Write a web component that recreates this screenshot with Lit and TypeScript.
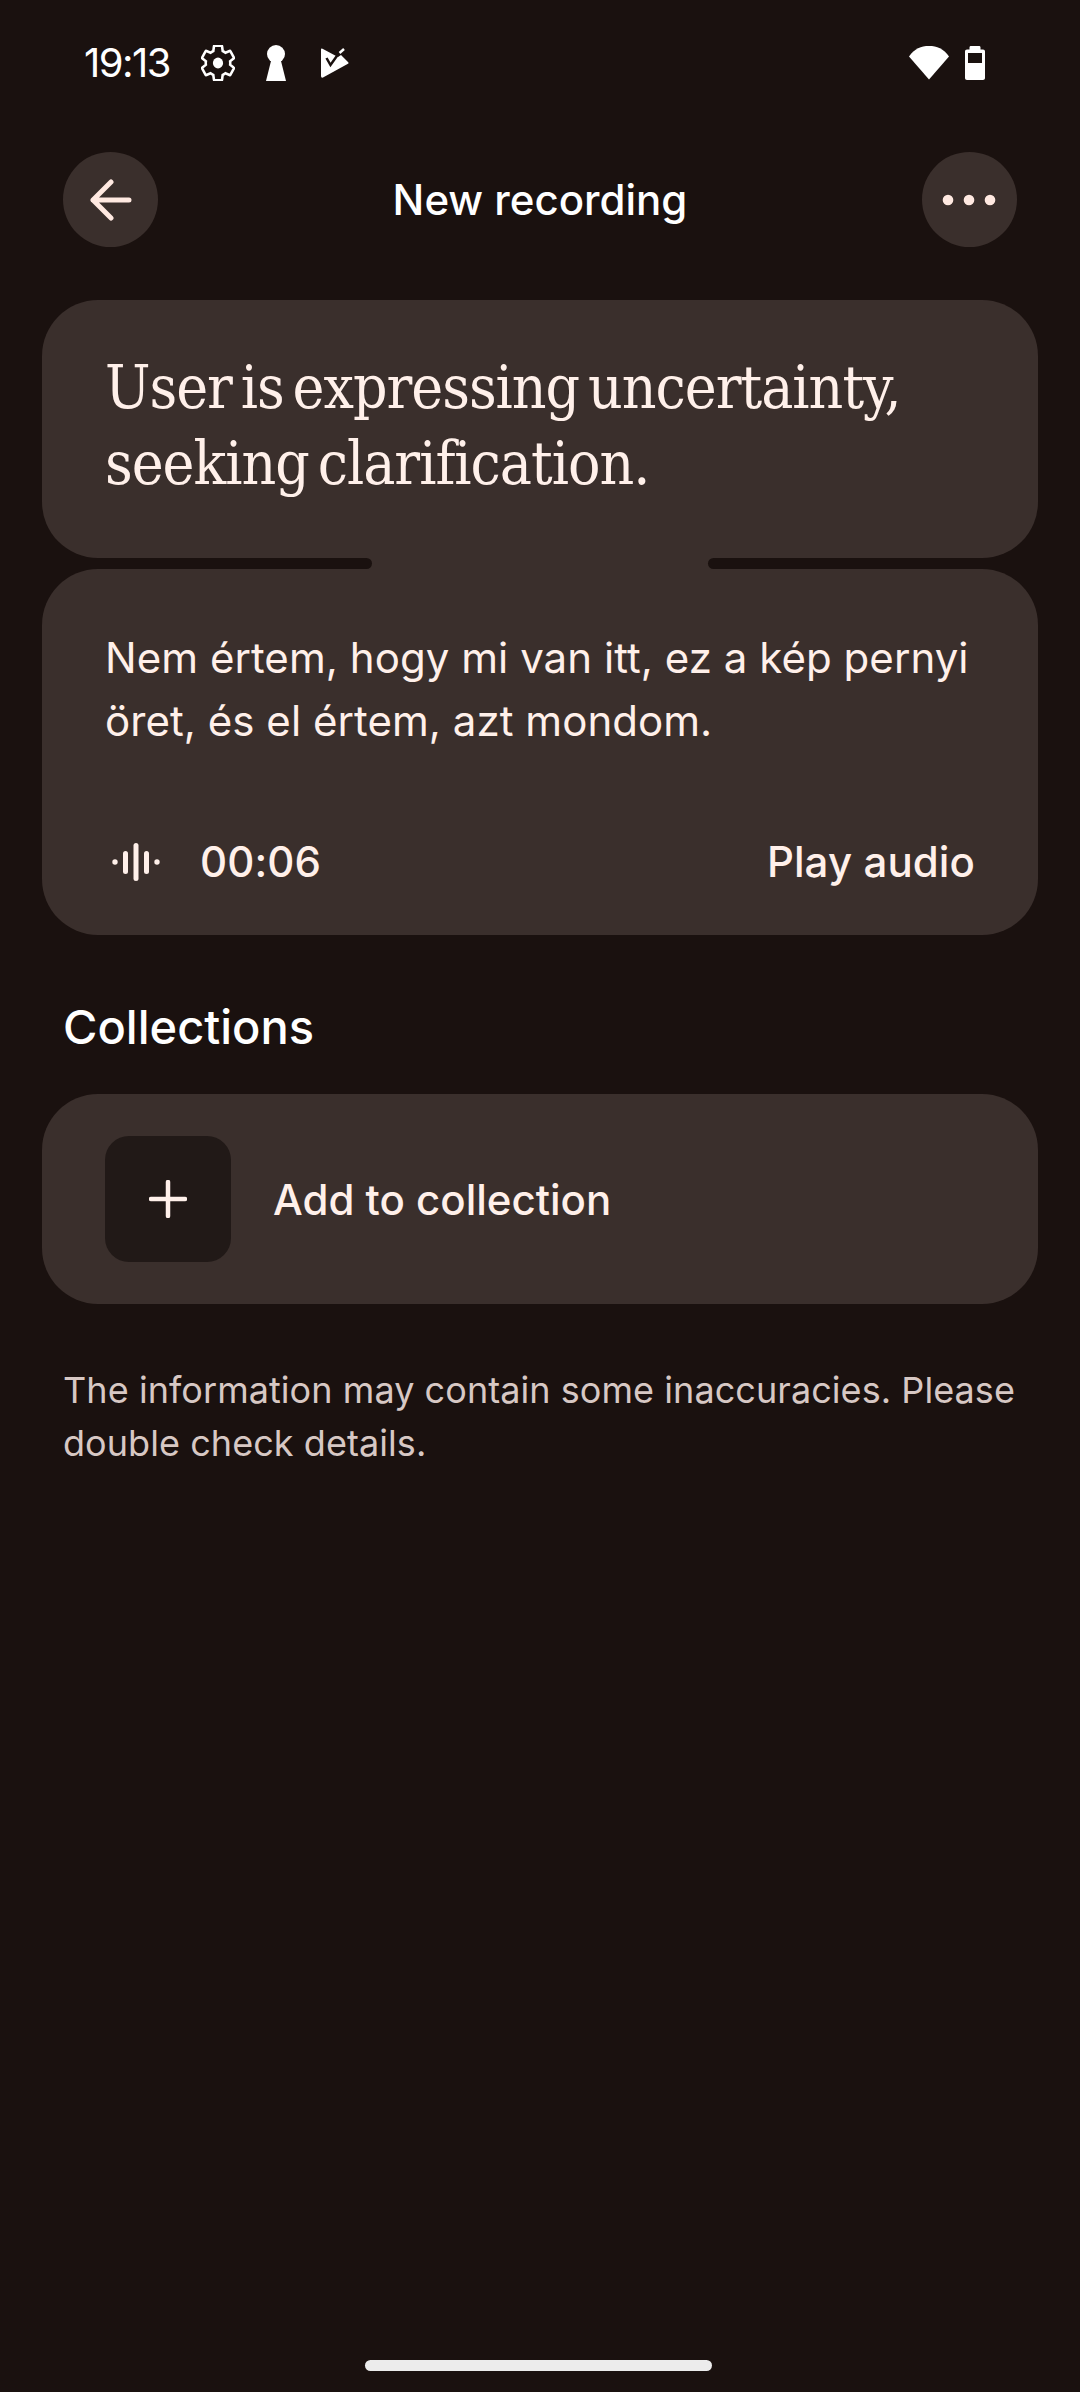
import { LitElement, html, css } from "lit";
import { customElement } from "lit/decorators.js";

@customElement("app-root")
export class AppRoot extends LitElement {
  static styles = css`
    :host { display: block; width: 1080px; height: 2392px; background: #1a110f; color: #fff0ea; font-family: Inter, "Noto Sans", sans-serif; overflow: hidden; }
    .page { height: 2392px; display: flex; flex-direction: column; }
    .status { height: 126px; box-sizing: border-box; padding: 0 95px 0 84px; display: flex; align-items: flex-start; color: #fff; }
    .status-left { display: flex; align-items: center; height: 36px; margin-top: 45px; }
    .time { font-size: 40px; line-height: 36px; letter-spacing: -1.5px; width: 117px; color: #fff; }
    .status svg { display: block; }
    .gear { margin-right: 31px; }
    .key { margin-right: 35px; }
    .status-right { margin-left: auto; margin-top: 45px; display: flex; gap: 16px; align-items: center; height: 36px; }
    .nav { height: 95px; margin: 26px 0 0; padding: 0 63px; display: flex; align-items: center; justify-content: space-between; }
    .round { width: 95px; height: 95px; border-radius: 50%; background: #3a2f2c; display: flex; align-items: center; justify-content: center; }
    .title { font-size: 42px; font-weight: 480; color: #fff; }
    .cards { margin: 53px 42px 0; display: flex; flex-direction: column; }
    .card { background: #3a2f2c; border-radius: 56px; }
    .summary { height: 258px; box-sizing: border-box; padding: 49px 63px 0; font-family: "DejaVu Serif", serif; font-stretch: condensed; font-size: 60px; line-height: 76px; letter-spacing: -1px; word-spacing: -7.3px; }
    .bridge { height: 11px; margin: 0 56px; background: #3a2f2c; display: flex; justify-content: space-between; }
    .bridge i { display: block; width: 274px; background: #1a110f; }
    .bridge i:first-child { border-radius: 0 6px 6px 0; }
    .bridge i:last-child { border-radius: 6px 0 0 6px; }
    .transcript { height: 366px; box-sizing: border-box; padding: 57px 63px 0; display: flex; flex-direction: column; }
    .transcript p { margin: 0; font-size: 42px; line-height: 63px; letter-spacing: 0.05px; }
    .player { margin-top: auto; margin-bottom: 48px; display: flex; align-items: center; font-size: 42px; font-weight: 450; letter-spacing: 0.1px; }
    .wave { margin-left: 7px; margin-right: 40px; }
    .play { margin-left: auto; }
    h2 { margin: 61px 63px 0; font-size: 47px; line-height: 62px; font-weight: 450; color: #fff; }
    .add { margin: 36px 42px 0; height: 210px; box-sizing: border-box; padding: 0 63px; display: flex; align-items: center; gap: 42px; font-size: 42px; font-weight: 450; }
    .thumb { width: 126px; height: 126px; border-radius: 24px; background: #211917; display: flex; align-items: center; justify-content: center; }
    .note { margin: 60px 63px 0; font-size: 36px; line-height: 53px; letter-spacing: 0.06px; color: #d7c8c4; }
    .home { margin: auto 0 21px 365px; width: 347px; height: 11px; border-radius: 5.5px; background: #ececec; }
  `;

  render() {
    return html`<div class="page">
      <div class="status">
        <div class="status-left">
          <span class="time">19:13</span>
          <svg class="gear" width="34" height="36" viewBox="2 2 20 20" preserveAspectRatio="none"><path fill="none" stroke="#fff" stroke-width="1.5" d="M19.14,12.94c0.04-0.3,0.06-0.61,0.06-0.94c0-0.32-0.02-0.64-0.07-0.94l2.03-1.58c0.18-0.14,0.23-0.41,0.12-0.61 l-1.92-3.32c-0.12-0.22-0.37-0.29-0.59-0.22l-2.39,0.96c-0.5-0.38-1.03-0.7-1.62-0.94L14.4,2.81c-0.04-0.24-0.24-0.41-0.48-0.41 h-3.84c-0.24,0-0.43,0.17-0.47,0.41L9.25,5.35C8.66,5.59,8.12,5.92,7.63,6.29L5.24,5.33c-0.22-0.08-0.47,0-0.59,0.22L2.74,8.87 C2.62,9.08,2.66,9.34,2.86,9.48l2.03,1.58C4.84,11.36,4.8,11.69,4.8,12s0.02,0.64,0.07,0.94l-2.03,1.58 c-0.18,0.14-0.23,0.41-0.12,0.61l1.92,3.32c0.12,0.22,0.37,0.29,0.59,0.22l2.39-0.96c0.5,0.38,1.03,0.7,1.62,0.94l0.36,2.54 c0.05,0.24,0.24,0.41,0.48,0.41h3.84c0.24,0,0.44-0.17,0.47-0.41l0.36-2.54c0.59-0.24,1.13-0.56,1.62-0.94l2.39,0.96 c0.22,0.08,0.47,0,0.59-0.22l1.92-3.32c0.12-0.22,0.07-0.47-0.12-0.61L19.14,12.94z"/><circle cx="12" cy="12" r="3" fill="#fff"/></svg>
          <svg class="key" width="20" height="36" viewBox="0 0 20 36"><circle cx="10" cy="9" r="9" fill="#fff"/><path fill="#fff" d="M6 12h8l6 24H0z"/></svg>
          <svg width="28" height="30" viewBox="0 0 28 30"><path fill="#fff" d="M0 1.500Q0 0 1.500.8L17 9 20 7 27 14Q28 15 27 15.800L2 29.600Q0 30.300 0 28z"/><path fill="none" stroke="#1a110f" stroke-width="2.500" d="M5.500 10l4 7L18 5"/><path fill="none" stroke="#fff" stroke-width="2.500" d="M18.500 5L23 1"/></svg>
        </div>
        <div class="status-right">
          <svg width="40" height="34" viewBox="0 0 40 34"><path fill="#fff" d="M20 0C12 0 5.500 2.500 0 10.500L20 33.500 40 10.500C34.500 2.500 28 0 20 0z"/></svg>
          <svg width="20" height="34" viewBox="0 0 20 34"><path fill="#fff" fill-rule="evenodd" d="M6 0h8c1 0 1.500.5 1.500 1.500V3.500H18c1.200 0 2 .8 2 2V32c0 1.200-.8 2-2 2H2c-1.200 0-2-.8-2-2V5.500c0-1.200.8-2 2-2h2.500V1.500C4.500.5 5 0 6 0zM3 7v10h14V7z"/></svg>
        </div>
      </div>
      <div class="nav">
        <div class="round"><svg width="42" height="42" viewBox="0 0 42 42" fill="none" stroke="#ffe9e1" stroke-width="5" stroke-linecap="round" stroke-linejoin="round"><path d="M39 21H3M21 3L3 21l18 18"/></svg></div>
        <div class="title">New recording</div>
        <div class="round"><svg width="54" height="12" viewBox="0 0 54 12" fill="#ffe9e1"><circle cx="6" cy="6" r="5.300"/><circle cx="27" cy="6" r="5.300"/><circle cx="48" cy="6" r="5.300"/></svg></div>
      </div>
      <div class="cards">
        <div class="card summary">User is expressing uncertainty,<br />seeking clarification.</div>
        <div class="bridge"><i></i><i></i></div>
        <div class="card transcript">
          <p>Nem értem, hogy mi van itt, ez a kép pernyi<br />öret, és el értem, azt mondom.</p>
          <div class="player">
            <svg class="wave" width="48" height="38" viewBox="0 0 48 38" fill="#fff0ea"><circle cx="3" cy="19" r="2.700"/><rect x="11" y="8" width="5" height="23" rx="2.500"/><rect x="21.500" y="0" width="5" height="38" rx="2.500"/><rect x="32" y="8" width="5" height="23" rx="2.500"/><circle cx="45" cy="19" r="2.700"/></svg>
            <span>00:06</span>
            <span class="play">Play audio</span>
          </div>
        </div>
      </div>
      <h2>Collections</h2>
      <div class="card add">
        <div class="thumb"><svg width="38" height="38" viewBox="0 0 38 38" stroke="#fff0ea" stroke-width="4.500" stroke-linecap="round"><path d="M2 19h34M19 2v34"/></svg></div>
        <span>Add to collection</span>
      </div>
      <div class="note">The information may contain some inaccuracies. Please double check details.</div>
      <div class="home"></div>
    </div>`;
  }
}
